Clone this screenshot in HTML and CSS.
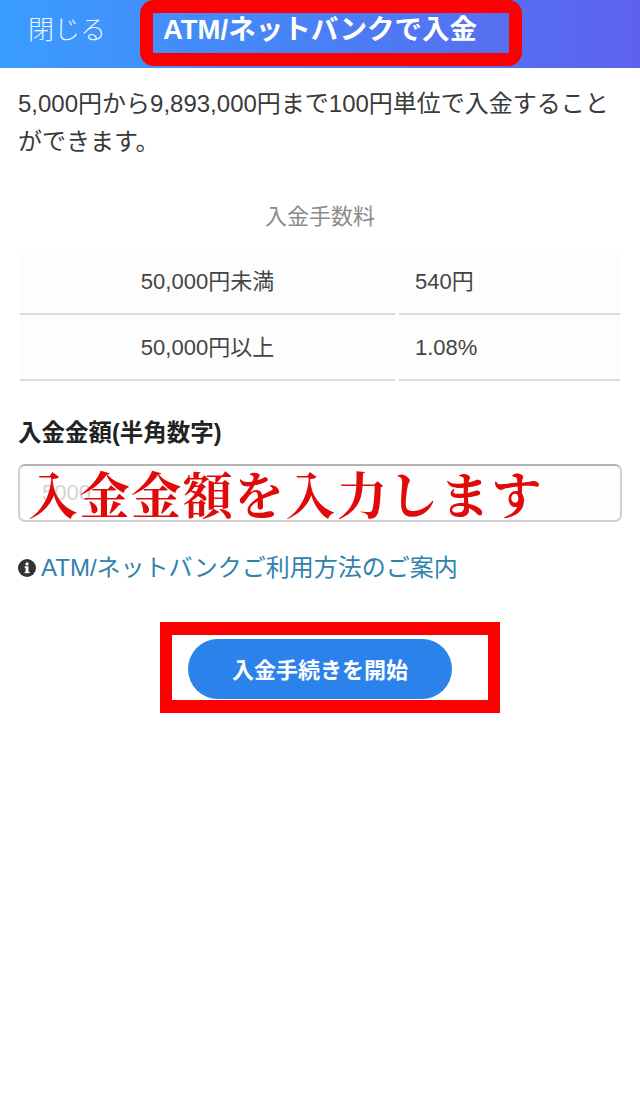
FILE: index.html
```html
<!DOCTYPE html>
<html lang="ja">
<head>
<meta charset="utf-8">
<title>ATM/ネットバンクで入金</title>
<link rel="stylesheet" href="styles.css">
</head>
<body>
<header class="topbar">
  <span class="close">閉じる</span>
  <h1 class="title">ATM/ネットバンクで入金</h1>
  <div class="mark-title"></div>
</header>
<main class="content">
  <p class="intro">5,000円から9,893,000円まで100円単位で入金することができます。</p>
  <h2 class="fee-heading">入金手数料</h2>
  <div class="fee-table">
    <div class="cell cell-left">50,000円未満</div>
    <div class="cell cell-right">540円</div>
    <div class="cell cell-left">50,000円以上</div>
    <div class="cell cell-right">1.08%</div>
  </div>
  <label class="amount-label" for="amount">入金金額(半角数字)</label>
  <div class="amount-field">
    <input class="amount-input" id="amount" type="text" placeholder="5000">
    <span class="amount-note">入金金額を入力します</span>
  </div>
  <p class="guide">
    <svg class="info" viewBox="0 0 18 18" aria-hidden="true"><circle cx="9" cy="9" r="9" fill="#333"/><rect x="7.6" y="7.6" width="2.9" height="6.4" fill="#fff"/><rect x="6.6" y="7.4" width="3.5" height="1.4" fill="#fff"/><rect x="6.6" y="12.8" width="5" height="1.4" fill="#fff"/><circle cx="9" cy="4.9" r="1.7" fill="#fff"/></svg>
    <a class="guide-link" href="#">ATM/ネットバンクご利用方法のご案内</a>
  </p>
  <div class="action">
    <div class="mark-button"><button class="start" type="button">入金手続きを開始</button></div>
  </div>
</main>
</body>
</html>
```
FILE: styles.css
```css
* { box-sizing: border-box; }
html, body { margin: 0; padding: 0; }
body {
  width: 640px;
  min-height: 1097px;
  background: #fff;
  color: #333;
  font-family: "Liberation Sans", "Noto Sans CJK JP", sans-serif;
}
.topbar {
  position: relative;
  display: flex;
  align-items: center;
  height: 68px;
  padding: 0 0 8px 28px;
  background: linear-gradient(90deg, #3a9dff 0%, #4a80f5 50%, #5d62ee 100%);
  color: #fff;
}
.close { font-size: 26px; line-height: 32px; font-weight: 300; width: 135px; color: #e8f3ff; }
.title { margin: 0; font-size: 27.5px; line-height: 32px; font-weight: 700; white-space: nowrap; position: relative; z-index: 1; }
.mark-title {
  position: absolute;
  left: 140px;
  top: 0;
  width: 382px;
  height: 66px;
  border: 13px solid #fa0000;
  border-radius: 14px;
}
.content { padding: 17px 18px 0; }
.intro { margin: 0; font-size: 24px; line-height: 38px; color: #3a3a3a; }
.fee-heading {
  margin: 41px 0 0;
  text-align: center;
  font-size: 22px;
  line-height: 30px;
  font-weight: 400;
  color: #8a8a8a;
}
.fee-table {
  display: grid;
  grid-template-columns: 375px 221px;
  column-gap: 4px;
  margin: 17px 0 0 2px;
}
.cell {
  height: 66px;
  display: flex;
  align-items: center;
  padding-top: 2px;
  background: #fdfdfd;
  border-bottom: 2px solid #dcdcdc;
  font-size: 22px;
  line-height: 30px;
  color: #444;
}
.cell-left { justify-content: center; }
.cell-right { padding-left: 16px; }
.amount-label {
  display: block;
  margin-top: 37px;
  font-size: 23.5px;
  line-height: 30px;
  font-weight: 700;
  color: #222;
}
.amount-field { position: relative; margin-top: 16px; height: 58px; }
.amount-input {
  display: block;
  width: 604px;
  height: 58px;
  padding: 0 22px;
  border: 2px solid #cfcfcf;
  border-top-color: #b4b4b4;
  border-radius: 7px;
  background: #fefefe;
  font: 22px "Liberation Sans", sans-serif;
}
.amount-input::placeholder { color: #d4d4d4; }
.amount-note {
  position: absolute;
  left: 10px;
  top: -5px;
  font-family: "Noto Serif CJK JP", "Noto Sans CJK JP", serif;
  font-size: 50px;
  line-height: 66px;
  letter-spacing: 1.5px;
  font-weight: 700;
  color: #e00a0a;
  white-space: nowrap;
}
.guide {
  display: flex;
  align-items: center;
  gap: 5px;
  margin: 30px 0 0;
  height: 32px;
}
.info { width: 18px; height: 18px; flex: none; }
.guide-link { font-size: 24px; line-height: 32px; color: #2f82ad; text-decoration: none; white-space: nowrap; }
.action { display: flex; justify-content: center; margin-top: 38px; padding-left: 20px; }
.mark-button {
  display: flex;
  width: 340px;
  height: 91px;
  padding: 4px 0 0 16px;
  border: solid #fa0000;
  border-width: 13px 12px 13px 12px;
}
.start {
  width: 264px;
  height: 60px;
  padding: 0 0 3px;
  border: 0;
  border-radius: 30px;
  background: #2b82ea;
  color: #fff;
  font-family: inherit;
  font-size: 22px;
  font-weight: 700;
}
```
